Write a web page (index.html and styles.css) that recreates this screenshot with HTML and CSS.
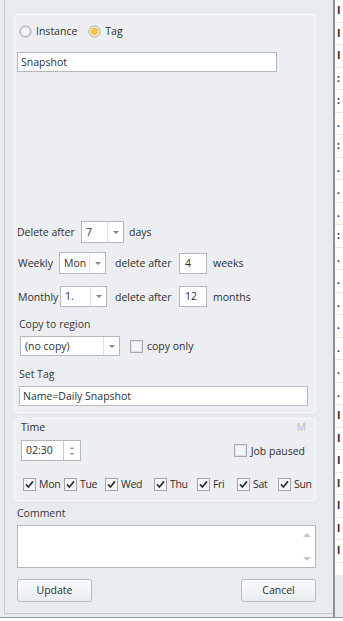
FILE: index.html
```html
<!DOCTYPE html>
<html>
	<head>
		<meta charset="utf-8" />
		<title>Snapshot job</title>
		<link rel="stylesheet" href="styles.css">
	</head>
	<body>
		<div class="screen">
			<div class="top">
				<div class="frame">
					<div class="client">
						<!-- schedule group -->
						<div class="group g1">
							<div class="radios">
								<label class="radio">
									<svg width="13" height="13" viewBox="0 0 13 13"><circle cx="6.5" cy="6.5" r="5.5" fill="#f3f4f5" stroke="#9ca1a7"/><circle cx="6.5" cy="6.5" r="4.2" fill="none" stroke="#dcdfe2"/></svg>
									<span>Instance</span>
								</label>
								<label class="radio">
									<svg width="13" height="13" viewBox="0 0 13 13"><circle cx="6.5" cy="6.5" r="5.5" fill="#fbf3da" stroke="#a8a49a"/><circle cx="6.5" cy="6.5" r="3.2" fill="#f7cb45" stroke="#e0a52a" stroke-width=".8"/></svg>
									<span>Tag</span>
								</label>
							</div>
							<div class="field snap">Snapshot</div>

							<div class="row r-del">
								<span class="lbl w-del">Delete after</span>
								<div class="combo c-day"><span class="val">7</span><span class="drop"><i></i></span></div>
								<span class="lbl gap5">days</span>
							</div>
							<div class="row r-week">
								<span class="lbl w-week">Weekly</span>
								<div class="combo c-wk"><span class="val">Mon</span><span class="drop"><i></i></span></div>
								<span class="lbl w-after">delete after</span>
								<div class="field num">4</div>
								<span class="lbl gap6">weeks</span>
							</div>
							<div class="row r-month">
								<span class="lbl w-month">Monthly</span>
								<div class="combo c-wk"><span class="val">1.</span><span class="drop"><i></i></span></div>
								<span class="lbl w-after2">delete after</span>
								<div class="field num">12</div>
								<span class="lbl gap6">months</span>
							</div>

							<div class="caption c-copy">Copy to region</div>
							<div class="row r-copy">
								<div class="combo c-region"><span class="val">(no copy)</span><span class="drop"><i></i></span></div>
								<label class="check gap10">
									<svg width="13" height="13" viewBox="0 0 13 13"><rect x=".5" y=".5" width="12" height="12" fill="#f4f5f6" stroke="#a4aab0"/><rect x="1.5" y="1.5" width="10" height="10" fill="none" stroke="#e2e5e8"/></svg>
									<span>copy only</span>
								</label>
							</div>
							<div class="caption c-tag">Set Tag</div>
							<div class="field settag">Name=Daily Snapshot</div>
						</div>

						<!-- time group -->
						<div class="group g2">
							<div class="time-head">
								<span>Time</span>
								<span class="hint">M</span>
							</div>
							<div class="time-row">
								<div class="spin">
									<span class="spin-val">02:30</span>
									<span class="spin-btn"><i class="up"></i><i class="down"></i></span>
								</div>
								<label class="check">
									<svg width="13" height="13" viewBox="0 0 13 13"><rect x=".5" y=".5" width="12" height="12" fill="#f4f5f6" stroke="#a4aab0"/><rect x="1.5" y="1.5" width="10" height="10" fill="none" stroke="#e2e5e8"/></svg>
									<span>Job paused</span>
								</label>
							</div>
							<div class="days">
								<label class="check"><svg width="13" height="13" viewBox="0 0 13 13"><rect x=".5" y=".5" width="12" height="12" fill="#f6f7f8" stroke="#9ea4aa"/><path d="M3 6.4l2.4 2.6L10 3.4" fill="none" stroke="#2f3133" stroke-width="1.7"/></svg><span>Mon</span></label>
								<label class="check"><svg width="13" height="13" viewBox="0 0 13 13"><rect x=".5" y=".5" width="12" height="12" fill="#f6f7f8" stroke="#9ea4aa"/><path d="M3 6.4l2.4 2.6L10 3.4" fill="none" stroke="#2f3133" stroke-width="1.7"/></svg><span>Tue</span></label>
								<label class="check"><svg width="13" height="13" viewBox="0 0 13 13"><rect x=".5" y=".5" width="12" height="12" fill="#f6f7f8" stroke="#9ea4aa"/><path d="M3 6.4l2.4 2.6L10 3.4" fill="none" stroke="#2f3133" stroke-width="1.7"/></svg><span>Wed</span></label>
								<label class="check"><svg width="13" height="13" viewBox="0 0 13 13"><rect x=".5" y=".5" width="12" height="12" fill="#f6f7f8" stroke="#9ea4aa"/><path d="M3 6.4l2.4 2.6L10 3.4" fill="none" stroke="#2f3133" stroke-width="1.7"/></svg><span>Thu</span></label>
								<label class="check"><svg width="13" height="13" viewBox="0 0 13 13"><rect x=".5" y=".5" width="12" height="12" fill="#f6f7f8" stroke="#9ea4aa"/><path d="M3 6.4l2.4 2.6L10 3.4" fill="none" stroke="#2f3133" stroke-width="1.7"/></svg><span>Fri</span></label>
								<label class="check"><svg width="13" height="13" viewBox="0 0 13 13"><rect x=".5" y=".5" width="12" height="12" fill="#f6f7f8" stroke="#9ea4aa"/><path d="M3 6.4l2.4 2.6L10 3.4" fill="none" stroke="#2f3133" stroke-width="1.7"/></svg><span>Sat</span></label>
								<label class="check"><svg width="13" height="13" viewBox="0 0 13 13"><rect x=".5" y=".5" width="12" height="12" fill="#f6f7f8" stroke="#9ea4aa"/><path d="M3 6.4l2.4 2.6L10 3.4" fill="none" stroke="#2f3133" stroke-width="1.7"/></svg><span>Sun</span></label>
							</div>
						</div>

						<div class="caption c-comment">Comment</div>
						<div class="memo">
							<span class="memo-scroll"><i class="up"></i><i class="down"></i></span>
						</div>
						<div class="buttons">
							<div class="btn">Update</div>
							<div class="btn">Cancel</div>
						</div>
					</div>
				</div>
				<!-- list of the window behind, cut off at the edge -->
				<div class="side">
					<div class="side-list">
						<div>I</div>
						<div>I</div>
						<div>I</div>
						<div>:</div>
						<div>:</div>
						<div>.</div>
						<div>:</div>
						<div>.</div>
						<div>.</div>
						<div>.</div>
						<div>:</div>
						<div>.</div>
						<div>.</div>
						<div>.</div>
						<div>.</div>
						<div>.</div>
						<div>.</div>
						<div>.</div>
						<div>I</div>
						<div>I</div>
						<div>I</div>
						<div>l</div>
						<div>l</div>
						<div>l</div>
						<div>l</div>
					</div>
				</div>
			</div>
		</div>
	</body>
</html>
```

FILE: styles.css
```css
* {
	padding: 0px;
	margin: 0px;
	box-sizing: border-box;
}

body {
	background: #ffffff;
	font-family: "Open Sans", "Noto Sans", sans-serif;
	font-size: 10.5px;
	color: #2f2f2f;
}

.screen {
	width: 343px;
	height: 621px;
}

.top {
	display: flex;
	height: 618px;
	border-bottom: 1px solid #8f959b;
	background: #e7eaee;
}

.frame {
	width: 335px;
	padding-left: 4px;
	padding-bottom: 3px;
	border-right: 2px solid #8b9197;
}

.client {
	border-left: 1px solid #c4c9cf;
	border-bottom: 1px solid #c4c9cf;
	padding: 14px 17px 11px 9px;
}

/* groups */
.group {
	background: #eceef1;
	border: 1px solid #f8f9fa;
	border-radius: 3px;
}

.g1 {
	height: 399px;
	padding-top: 9px;
}

.g2 {
	height: 83px;
	margin-top: 5px;
	padding-top: 1px;
}

.radios {
	display: flex;
	height: 14px;
	padding-left: 4px;
	align-items: center;
}

.radio,
.check {
	display: flex;
	align-items: center;
}

.radio svg,
.check svg {
	display: block;
	flex: none;
}

.radio span {
	margin-left: 4px;
	margin-right: 11px;
}

.check span {
	margin-left: 4px;
}

.field {
	background: #ffffff;
	border: 1px solid #b2b8bf;
	height: 20px;
	line-height: 18px;
	padding-left: 3px;
}

.snap {
	width: 260px;
	margin-top: 14px;
	margin-left: 2px;
}

.row {
	display: flex;
	align-items: center;
	padding-left: 2px;
}

.r-del {
	height: 22px;
	margin-top: 149px;
}

.r-week {
	height: 22px;
	margin-top: 9px;
}

.r-month {
	height: 21px;
	margin-top: 12px;
}

.r-copy {
	height: 20px;
	margin-top: 4px;
	padding-left: 5px;
}

.lbl {
	flex: none;
}

.w-del {
	width: 64px;
}

.w-week {
	width: 42px;
	padding-left: 1px;
}

.w-month {
	width: 43px;
	padding-left: 1px;
}

.w-after {
	width: 73px;
	padding-left: 9px;
}

.w-after2 {
	width: 72px;
	padding-left: 8px;
}

.gap5 {
	margin-left: 5px;
}

.gap6 {
	margin-left: 6px;
}

.gap10 {
	margin-left: 10px;
}

/* combo box */
.combo {
	display: flex;
	height: 100%;
	background: #ffffff;
	border: 1px solid #b2b8bf;
}

.combo .val {
	flex: 1;
	padding-left: 4px;
	line-height: 18px;
	white-space: nowrap;
}

.r-del .combo .val,
.r-week .combo .val {
	line-height: 20px;
}

.combo .drop {
	width: 16px;
	border-left: 1px solid #dfe2e6;
	display: flex;
	align-items: center;
	justify-content: center;
}

.combo .drop i {
	display: block;
	width: 0;
	height: 0;
	border-left: 3px solid transparent;
	border-right: 3px solid transparent;
	border-top: 3px solid #80868c;
}

.c-day {
	width: 43px;
}

.c-wk {
	width: 47px;
}

.c-region {
	width: 100px;
}

.num {
	width: 28px;
	height: 21px;
	line-height: 19px;
	padding-left: 5px;
}

.caption {
	height: 16px;
	line-height: 16px;
	padding-left: 4px;
	color: #383838;
}

.c-copy {
	margin-top: 9px;
}

.c-tag {
	margin-top: 10px;
}

.settag {
	width: 289px;
	margin-top: 4px;
	margin-left: 4px;
}

/* time group */
.time-head {
	display: flex;
	justify-content: space-between;
	height: 14px;
	line-height: 14px;
	padding-left: 6px;
	padding-right: 9px;
}

.hint {
	color: #b8bcc1;
}

.time-row {
	display: flex;
	justify-content: space-between;
	align-items: center;
	height: 21px;
	margin-top: 6px;
	padding-left: 6px;
	padding-right: 10px;
}

.spin {
	display: flex;
	width: 60px;
	height: 21px;
	background: #ffffff;
	border: 1px solid #b2b8bf;
}

.spin-val {
	flex: 1;
	line-height: 19px;
	padding-left: 4px;
	border-right: 1px solid #c6cbd0;
}

.spin-btn {
	width: 16px;
	display: flex;
	flex-direction: column;
	align-items: center;
	justify-content: center;
	gap: 4px;
}

.spin-btn i,
.memo-scroll i {
	display: block;
	width: 0;
	height: 0;
	border-left: 2px solid transparent;
	border-right: 2px solid transparent;
}

.spin-btn .up {
	border-bottom: 2px solid #7d8389;
}

.spin-btn .down {
	border-top: 2px solid #7d8389;
}

.days {
	display: grid;
	grid-template-columns: 41px 41px 49px 43px 40px 41px auto;
	height: 14px;
	margin-top: 16px;
	padding-left: 8px;
}

.days .check span {
	margin-left: 3px;
	letter-spacing: -0.3px;
}

/* comment */
.c-comment {
	height: 14px;
	line-height: 14px;
	margin-top: 5px;
	padding-left: 3px;
}

.memo {
	display: flex;
	justify-content: flex-end;
	height: 43px;
	margin-top: 5px;
	margin-left: 3px;
	background: #ffffff;
	border: 1px solid #b2b8bf;
}

.memo-scroll {
	width: 16px;
	display: flex;
	flex-direction: column;
	align-items: center;
	justify-content: space-between;
	padding: 7px 0 6px;
}

.memo-scroll i {
	border-left-width: 4px;
	border-right-width: 4px;
}

.memo-scroll .up {
	border-bottom: 4px solid #c2c6cb;
}

.memo-scroll .down {
	border-top: 4px solid #c2c6cb;
}

.buttons {
	display: flex;
	justify-content: space-between;
	margin-top: 11px;
	margin-left: 3px;
}

.btn {
	width: 75px;
	height: 23px;
	line-height: 21px;
	text-align: center;
	background: linear-gradient(#f9fafb, #e9ecef);
	border: 1px solid #b6bbc1;
	border-radius: 3px;
}

/* cut-off list at the right */
.side {
	width: 8px;
	height: 575px;
	background: #ffffff;
	overflow: hidden;
}

.side-list div {
	height: 22.5px;
	line-height: 20px;
	padding-left: 2px;
	border-bottom: 1px solid #e4e7ea;
	font-weight: bold;
	color: #2a2a2a;
}
```
